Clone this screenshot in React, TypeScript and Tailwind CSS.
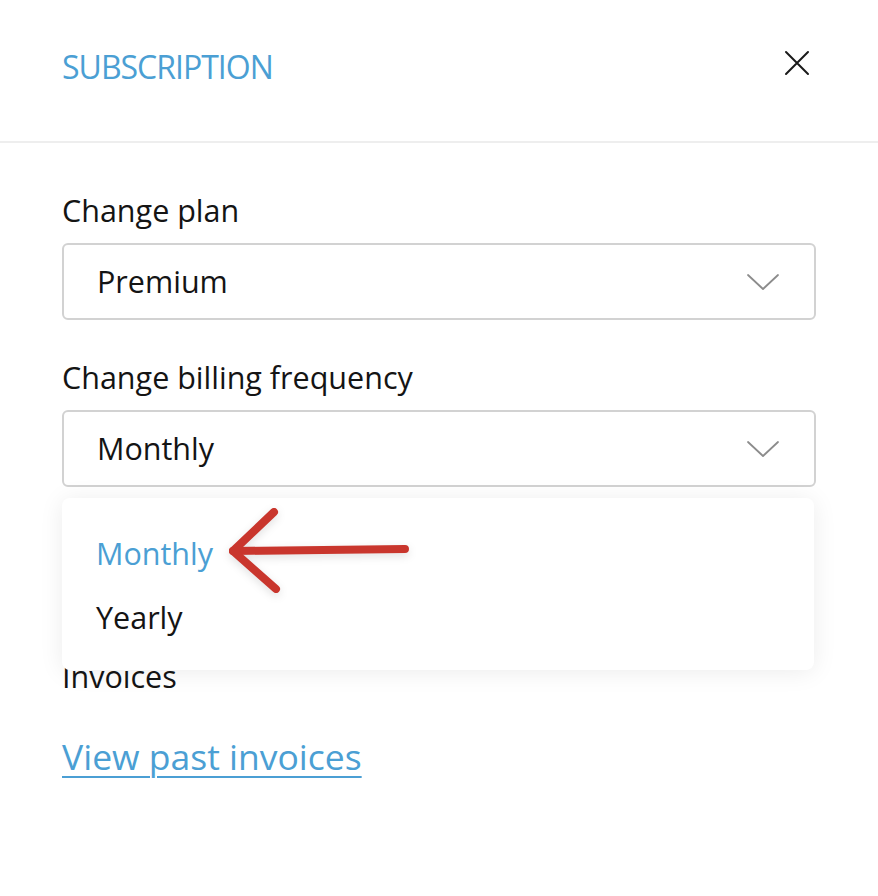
import React from 'react';

const Chevron = () => (
  <svg width="32" height="18" viewBox="0 0 32 18" fill="none" className="shrink-0">
    <path d="M1 2 L16 16 L31 2" stroke="#8c8c8c" strokeWidth="1.8" strokeLinecap="round" strokeLinejoin="round" />
  </svg>
);

const SelectBox = ({ value }: { value: string }) => (
  <div className="mt-[13px] h-[77px] flex items-center justify-between pl-[33px] pr-[35px] border-2 border-[#d2d2d2] rounded-[6px] bg-white">
    <span className="text-[30.5px] text-[#141414]">{value}</span>
    <Chevron />
  </div>
);

export default function App() {
  return (
    <div className="w-[878px] h-[896px] bg-white relative overflow-hidden" style={{ fontFamily: '"Open Sans", "Liberation Sans", sans-serif' }}>
      <header className="h-[143px] border-b-2 border-[#eeeeee] flex items-center justify-between pl-[62px] pr-[68px]">
        <h1 className="text-[32px] tracking-[-1px] text-[#4b9fd4] font-normal -mt-[8px]">SUBSCRIPTION</h1>
        <button className="-mt-[16px]">
          <svg width="26" height="26" viewBox="0 0 26 26" fill="none">
            <path d="M2 2 L24 24 M24 2 L2 24" stroke="#1a1a1a" strokeWidth="2" strokeLinecap="round" />
          </svg>
        </button>
      </header>

      <div className="px-[62px] pt-[47px]">
        <label className="block text-[30.5px] leading-[40px] text-[#141414]">Change plan</label>
        <SelectBox value="Premium" />

        <label className="block mt-[37px] text-[30.5px] leading-[40px] text-[#141414]">Change billing frequency</label>
        <SelectBox value="Monthly" />

        <div className="mt-[169px] text-[30.5px] leading-[40px] text-[#141414]">Invoices</div>
        <a href="#" className="block mt-[38px] text-[35.5px] leading-[44px] text-[#4b9fd4] underline underline-offset-[6px] decoration-2">
          View past invoices
        </a>
      </div>

      {/* open dropdown */}
      <div className="absolute left-[62px] top-[498px] w-[752px] h-[172px] bg-white rounded-[8px] shadow-[0_2px_24px_rgba(0,0,0,0.08)] pl-[34px] pt-[35px]">
        <div className="text-[30.5px] leading-[40px] text-[#4b9fd4]">Monthly</div>
        <div className="mt-[24px] text-[30.5px] leading-[40px] text-[#141414]">Yearly</div>
      </div>

      {/* annotation arrow */}
      <svg className="absolute left-0 top-0 pointer-events-none" width="878" height="896" viewBox="0 0 878 896" fill="none">
        <g stroke="#c9362d" strokeWidth="8" strokeLinecap="round" strokeLinejoin="round" style={{ filter: 'drop-shadow(0 3px 4px rgba(0,0,0,0.12))' }}>
          <path d="M405 549 L233 551" />
          <path d="M274 512 L233 551 L276 589" />
        </g>
      </svg>
    </div>
  );
}
